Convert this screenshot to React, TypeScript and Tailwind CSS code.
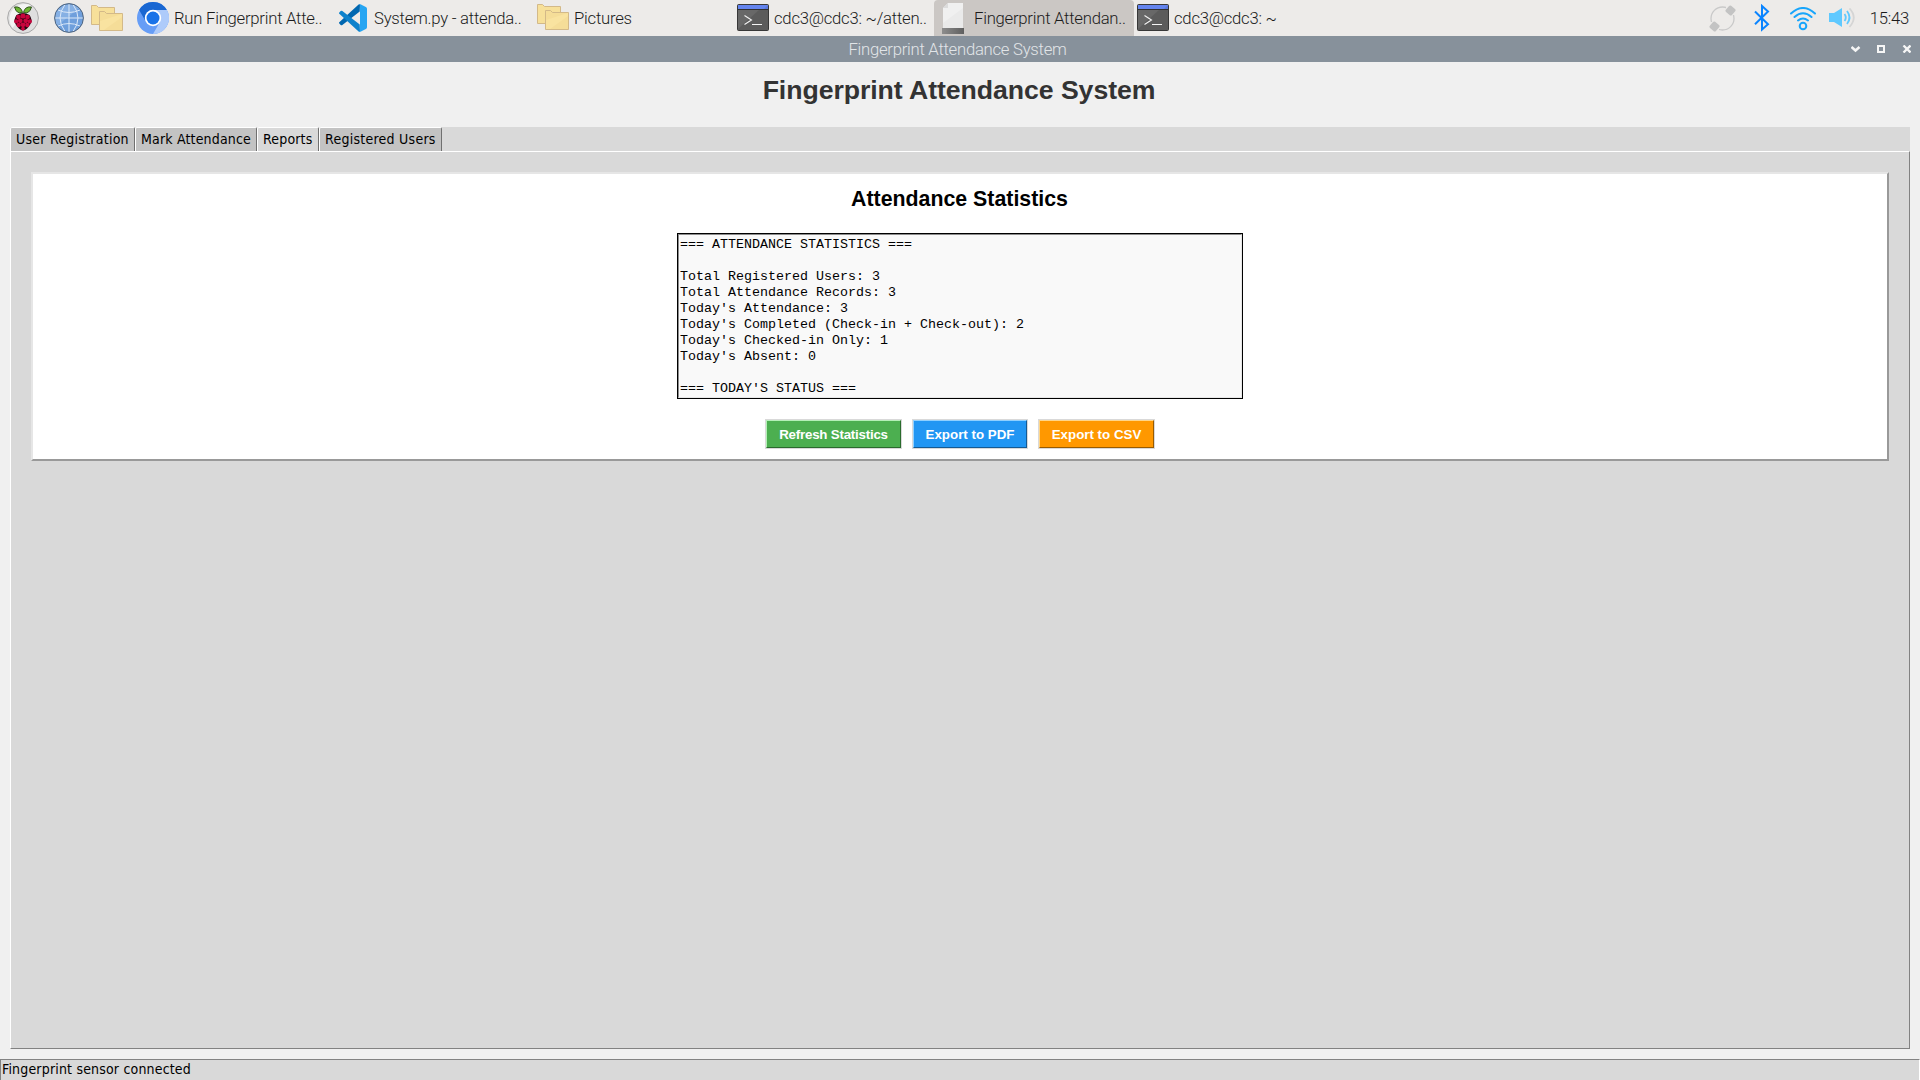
import React from "react";

const ui = "font-['Roboto'] font-light text-[16.7px] tracking-[-0.25px] text-[#1b1b1b]";

function Raspberry() {
  const drupes: [number, number, number][] = [
    [11.4, 15, 2.3], [16, 14, 2.6], [20.6, 15, 2.3],
    [9.2, 19.4, 2.1], [13.3, 18.8, 2.4], [18.7, 18.8, 2.4], [22.8, 19.4, 2.1],
    [11.7, 23, 2.2], [16, 22.8, 2.4], [20.3, 23, 2.2], [16, 26.6, 1.9],
  ];
  return (
    <svg viewBox="0 0 32 32" className="h-8 w-8">
      <circle cx="16" cy="16" r="15.4" fill="#dfdfdf" stroke="#a9a9a9" />
      <path d="M5.500 26 24 3.500A15 15 0 0 0 5.500 26" fill="#f4f4f4" />
      <path d="M9.5 13Q16 9 22.5 13Q26 18 23.5 22Q20 28 16 28.5Q12 28 8.500 22Q6 18 9.500 13" fill="#26060f" />
      {drupes.map(([x, y, r], i) => (
        <circle key={i} cx={x} cy={y} r={r} fill="#c7053d" />
      ))}
      <path d="M15.600 10.500Q9.500 12.500 7.500 5Q14 4 15.600 10.500ZM16.400 10.500Q22.500 12.500 24.500 5Q18 4 16.400 10.500Z" fill="#6cb534" stroke="#1f3a12" strokeWidth=".8" />
    </svg>
  );
}

function Globe() {
  return (
    <svg viewBox="0 0 30 30" className="h-[30px] w-[30px]">
      <circle cx="15" cy="15" r="14.400" fill="#6f9fdc" />
      <path d="M3 23 25 5A14.400 14.400 0 0 0 3 23" fill="#86b0e4" />
      <path d="M15 1V29M1 15H29M4 7Q15 12 26 7M4 23Q15 18 26 23M11 1.500Q1 15 11 28.500M19 1.500Q29 15 19 28.500" fill="none" stroke="#dbe8f8" strokeWidth="1" />
      <circle cx="15" cy="15" r="14.400" fill="none" stroke="#51657d" />
    </svg>
  );
}

function Folders() {
  return (
    <svg viewBox="0 0 32 27" className="h-[27px] w-8">
      <path d="M.5 19.500V.5H5.500L7.500 2.500H23.500V19.500Z" fill="#f7e09a" stroke="#d3b988" />
      <path d="M8.500 25.500V6.500H13.500L15.500 8.500H31.500V25.500Z" fill="#f5dd98" stroke="#d3b988" />
      <path d="M9 25V16L31 9V12L13 25Z" fill="#f9e3a0" />
    </svg>
  );
}

function Chromium() {
  return (
    <svg viewBox="0 0 32 32" className="h-8 w-8">
      <circle cx="16" cy="16" r="16" fill="#669df6" />
      <path d="M16 8H29.860A16 16 0 0 1 16 32L22.900 20Z" fill="#aecbfa" />
      <path d="M16 8H29.860A16 16 0 0 0 2.140 8L9.070 20A8 8 0 0 1 16 8Z" fill="#1967d2" />
      <circle cx="16" cy="16" r="8.200" fill="#fff" />
      <circle cx="16" cy="16" r="6.500" fill="#1a73e8" />
    </svg>
  );
}

function Code() {
  return (
    <svg viewBox="0 0 100 100" className="h-7 w-7">
      <path d="M96 11 75 1 74 27 12 75Q9 77 6 75L1 70Q-1 67 1 65L70 2Q73 0 76 1" fill="#0067b0" />
      <path d="M96 89 75 99 74 73 12 25Q9 23 6 25L1 30Q-1 33 1 35L70 98Q73 100 76 99" fill="#0d82cc" />
      <path d="M76 99Q72 100 70 98Q75 100 75 93V7Q75 0 70 2Q73 0 76 1L96 11Q100 13 100 17V83Q100 87 96 89Z" fill="#26a5f2" />
    </svg>
  );
}

function Terminal() {
  return (
    <svg viewBox="0 0 32 27" className="h-[27px] w-8">
      <rect x=".5" y=".5" width="31" height="26" rx="1" fill="#5b5b5b" stroke="#373737" />
      <path d="M1 25V6H22Z" fill="#686868" />
      <rect x="1" y="1" width="30" height="4" fill="#5876db" />
      <path d="M1 1H31L27 5H1Z" fill="#6484ee" />
      <path d="M1 5.500H31" stroke="#303030" />
      <path d="M7.500 11.500 14.500 16 7.500 20.500M15 20.500H25" fill="none" stroke="#f4f4f4" strokeWidth="1.100" />
    </svg>
  );
}

function BlankPage() {
  return (
    <svg viewBox="0 0 22 31" className="h-[31px] w-[22px]">
      <defs>
        <linearGradient id="base"><stop stopColor="#8d8d8d" /><stop offset="1" stopColor="#5f5f5f" /></linearGradient>
      </defs>
      <path d="M6 0H21V26H1V5Z" fill="#f0f0f0" />
      <path d="M1 26V20L21 5V26Z" fill="#eaeaea" />
      <path d="M6 0V5H1Z" fill="#dcdcdc" />
      <path d="M0 25H22V31H0Z" fill="url(#base)" />
    </svg>
  );
}

function Tray() {
  return (
    <div className="flex items-center">
      <svg viewBox="0 0 27 27" className="mr-[18px] h-[27px] w-[27px]">
        <circle cx="13.500" cy="13.500" r="11.500" fill="none" stroke="#c9c9c9" strokeWidth="1.300" />
        <path d="M17 0H27V10H17ZM0 17H10V27H0Z" fill="#edebe9" />
        <rect x="17.500" y="1.500" width="8" height="8" rx="1.500" fill="#c3c3c3" transform="rotate(40 21.500 5.500)" />
        <rect x="1.500" y="17.500" width="8" height="8" rx="1.500" fill="#c3c3c3" transform="rotate(40 5.500 21.500)" />
      </svg>
      <svg viewBox="0 0 16 28" className="mr-[19px] h-7 w-4">
        <path d="M1 7.500 14 20.200 8 25.500V2L14 7.500 1 20.200" fill="none" stroke="#0a84ff" strokeWidth="2" />
      </svg>
      <svg viewBox="0 0 28 24" className="mr-[12px] h-6 w-7 translate-y-px">
        <g fill="none" stroke="#18a5fb" strokeWidth="2" strokeLinecap="round">
          <path d="M2 6.500Q14-4.500 26 6.500M5.500 10Q14 2.500 22.500 10M9 13.500Q14 9.500 19 13.500" />
          <circle cx="14" cy="19" r="3.300" />
        </g>
      </svg>
      <svg viewBox="0 0 26 20" className="mr-[15px] h-5 w-[26px]">
        <path d="M0 5H5L13 0V19L5 14H0Z" fill="#5fc9ff" />
        <path d="M15.500 6Q18 9.500 15.500 13M18 3Q23 9.500 18 16" fill="none" stroke="#5fc9ff" strokeWidth="1.800" />
        <path d="M20.500.5Q29 9.500 20.500 19" fill="none" stroke="#d5d5d5" strokeWidth="1.800" />
      </svg>
      <span className="pt-0.5">15:43</span>
    </div>
  );
}

function Taskbar() {
  return (
    <div className={`flex h-9 items-center justify-between bg-[#edebe9] pr-[11px] pl-[7px] whitespace-nowrap ${ui}`}>
      <div className="flex h-full items-center">
        <Raspberry />
        <div className="ml-[15px] flex"><Globe /></div>
        <div className="ml-[7px] flex w-[46px]"><Folders /></div>
        <div className="flex w-[202px] items-center gap-[5px]"><Chromium /><span className="pt-0.5">Run Fingerprint Atte..</span></div>
        <div className="flex w-[198px] items-center gap-[7px]"><Code /><span className="pt-0.5">System.py - attenda..</span></div>
        <div className="flex w-[200px] items-center gap-[5px]"><Folders /><span className="pt-0.5">Pictures</span></div>
        <div className="flex w-[197px] items-center gap-[5px]"><Terminal /><span className="pt-0.5">cdc3@cdc3: ~/atten..</span></div>
        <div className="flex h-full w-[200px] items-center gap-[10px] rounded-t-sm bg-[#cbc7c4] pl-2"><BlankPage /><span className="pt-0.5">Fingerprint Attendan..</span></div>
        <div className="ml-[3px] flex items-center gap-[5px]"><Terminal /><span className="pt-0.5">cdc3@cdc3: ~</span></div>
      </div>
      <Tray />
    </div>
  );
}

function TitleBar() {
  return (
    <div className="grid h-[26px] grid-cols-[1fr_auto_1fr] items-center bg-[#87919b] font-['Roboto'] text-[16.7px] font-light tracking-[-0.26px] text-[#e2e5e8]">
      <span />
      <span className="pt-0.5 pr-[5px] leading-none">Fingerprint Attendance System</span>
      <svg viewBox="0 0 60 8" className="mr-[9px] h-2 w-[60px] justify-self-end" fill="none" stroke="#f6f6f6" strokeWidth="2">
        <path d="M0.500 2 4.500 5.500 8.500 2" strokeWidth="2.500" />
        <rect x="27" y="1" width="6" height="6" />
        <path d="M52.500 0.500 59.500 7.500M59.500 0.500 52.500 7.500" strokeWidth="2.300" />
      </svg>
    </div>
  );
}

const tabs = [
  { label: "User Registration", size: "w-[125px] tracking-[0.25px]" },
  { label: "Mark Attendance", size: "w-[122px] tracking-[0.17px]" },
  { label: "Reports", size: "w-[62px] tracking-[0.17px]" },
  { label: "Registered Users", size: "w-[123px] tracking-[0.26px]" },
];

function Tabs() {
  return (
    <div className="flex h-6 bg-[#d9d9d9]">
      {tabs.map((t) => {
        const active = t.label === "Reports";
        return (
          <div
            key={t.label}
            className={`${t.size} flex rounded-t-[2px] border-t border-r border-l border-t-white border-r-[#707070] border-l-white pl-[5px] text-[14px] leading-[22px] whitespace-nowrap text-black ${active ? "-mb-px h-[25px] bg-[#d9d9d9]" : "bg-[#c3c3c3]"}`}
          >
            {t.label}
          </div>
        );
      })}
    </div>
  );
}

const stats = `=== ATTENDANCE STATISTICS ===

Total Registered Users: 3
Total Attendance Records: 3
Today's Attendance: 3
Today's Completed (Check-in + Check-out): 2
Today's Checked-in Only: 1
Today's Absent: 0

=== TODAY'S STATUS ===`;

const buttons = [
  { label: "Refresh Statistics", look: "w-[135px] tracking-[-0.22px] bg-[#4caf50] border-t-[#b5f0b7] border-l-[#b5f0b7] border-r-[#2a6b2d] border-b-[#2a6b2d]" },
  { label: "Export to PDF", look: "w-[114px] bg-[#2196f3] border-t-[#8fd0ff] border-l-[#8fd0ff] border-r-[#145a94] border-b-[#145a94]" },
  { label: "Export to CSV", look: "w-[115px] bg-[#ff9800] border-t-[#ffd68a] border-l-[#ffd68a] border-r-[#995b00] border-b-[#995b00]" },
];

export default function App() {
  return (
    <div className="flex h-[1080px] w-[1920px] flex-col overflow-hidden bg-[#f0f0f0]">
      <Taskbar />
      <TitleBar />
      <h1 className="h-[65px] pt-[12px] pr-[2px] text-center font-['Liberation_Sans'] text-[26.67px] leading-[32px] font-bold tracking-[-0.06px] text-[#333333]">Fingerprint Attendance System</h1>
      <div className="mx-[10px] flex h-[922px] flex-col font-['DejaVu_Sans_Condensed','DejaVu_Sans']">
        <Tabs />
        <div className="flex-1 border border-t-white border-r-[#828282] border-b-[#828282] border-l-white bg-[#d9d9d9] px-5 pt-5">
          <div className="flex h-[289px] flex-col items-center border-2 border-t-[#e6e6e6] border-r-[#999999] border-b-[#999999] border-l-[#e6e6e6] bg-white font-['Liberation_Sans']">
            <h2 className="mt-[13px] h-[46px] pr-px text-[21.330px] leading-6 font-bold text-black">Attendance Statistics</h2>
            <div className="h-[166px] w-[566px] border border-black bg-[#f9f9f9]">
              <pre className="h-full border border-t-[#8c8c8c] border-r-[#e8e8e8] border-b-[#e8e8e8] border-l-[#8c8c8c] pt-0.5 pl-px font-['Liberation_Mono'] text-[13.330px] leading-4 text-black">{stats}</pre>
            </div>
            <div className="mt-[20px] flex gap-[10px]">
              {buttons.map((b) => (
                <div key={b.label} className="border border-[#d9d9d9]">
                  <div className={`${b.look} h-7 border pt-px text-center text-[13.330px] leading-[26px] font-bold text-white`}>{b.label}</div>
                </div>
              ))}
            </div>
          </div>
        </div>
      </div>
      <div className="mt-[10px] flex-1 border-t border-r border-l border-t-[#828282] border-r-white border-l-[#828282] bg-[#d9d9d9] pl-px font-['DejaVu_Sans_Condensed','DejaVu_Sans'] text-[14px] leading-[18px] tracking-[0.18px] text-black">Fingerprint sensor connected</div>
    </div>
  );
}
